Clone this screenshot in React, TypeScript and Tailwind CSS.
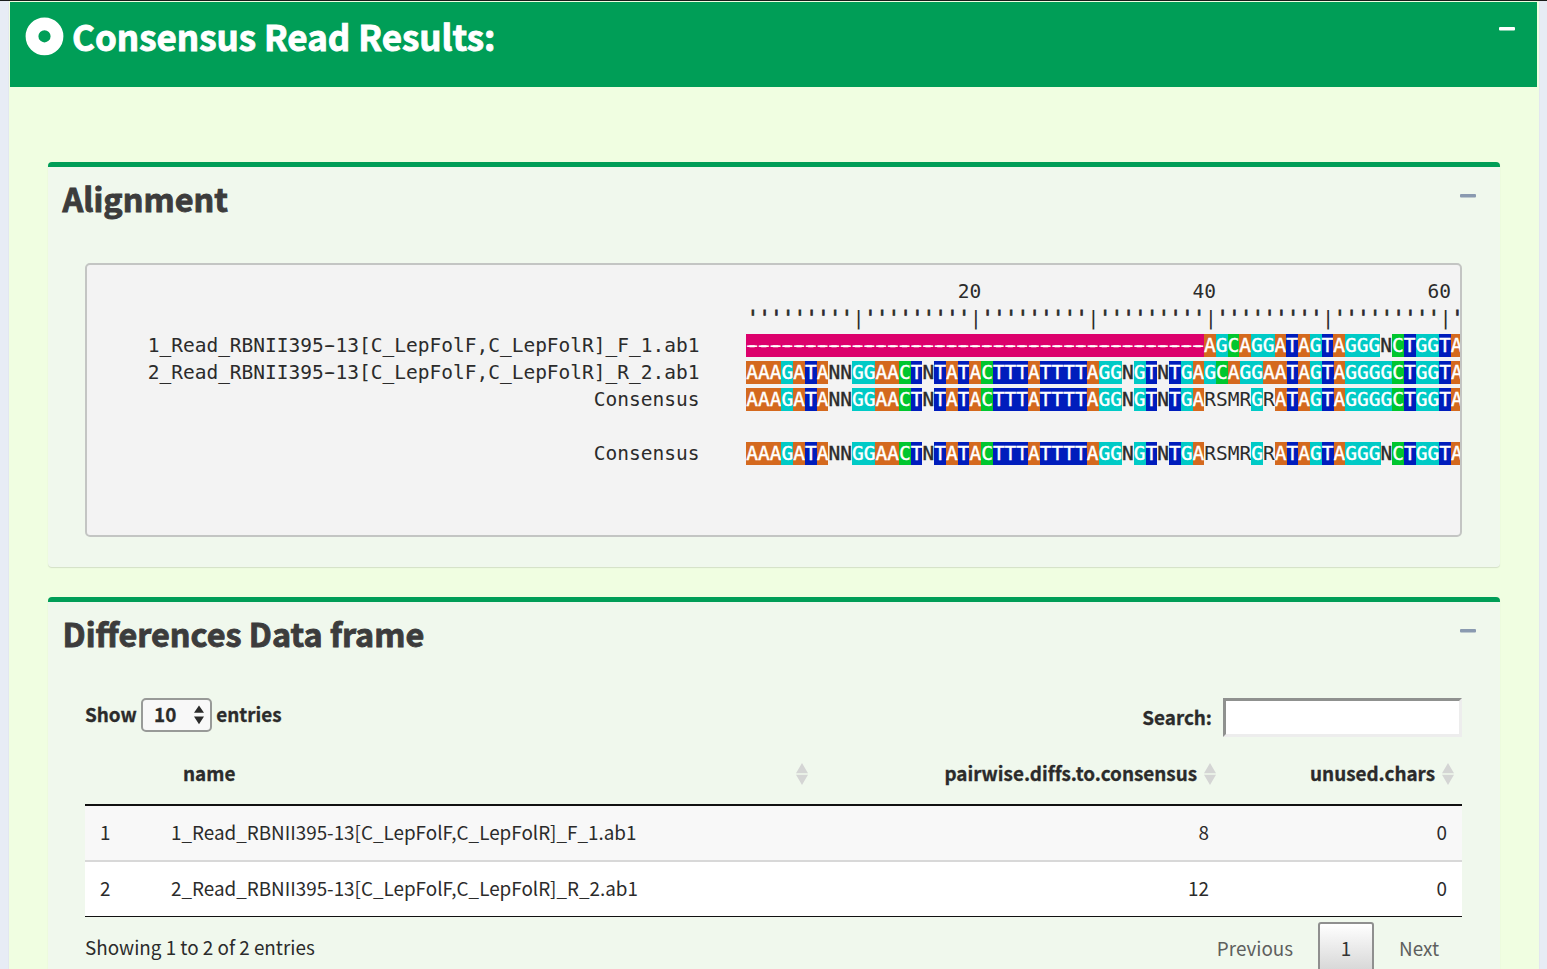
import React from 'react';

const TAIL_A = 'ATAGTAGGGGCTGGTA';
const TAIL_B = 'ATAGTAGGGNCTGGTA';
const HEAD = 'AAAGATANNGGAACTNTATACTTTATTTTAGGNGTNTGA';

const rows: { name: string; seq: string }[] = [
  { name: '1_Read_RBNII395-13[C_LepFolF,C_LepFolR]_F_1.ab1', seq: '-'.repeat(39) + 'AGCAGG' + TAIL_B },
  { name: '2_Read_RBNII395-13[C_LepFolF,C_LepFolR]_R_2.ab1', seq: HEAD + 'GCAGGA' + TAIL_A },
  { name: 'Consensus', seq: HEAD + 'RSMRGR' + TAIL_A },
  { name: '', seq: '' },
  { name: 'Consensus', seq: HEAD + 'RSMRGR' + TAIL_B },
];

const white = ' text-white [-webkit-text-stroke:0.4px_#fff]';

const baseClass: Record<string, string> = {
  A: 'bg-[#d4691e]' + white,
  G: 'bg-[#00cac6]' + white,
  T: 'bg-[#001dbc]' + white,
  C: 'bg-[#00c62e]' + white,
  N: '[-webkit-text-stroke:0.4px_#2b2b2b]',
  // Side shadows widen each hyphen until it fills its cell.
  '-': 'bg-[#dc006c] text-white [-webkit-text-stroke:0.3px_#fff] [text-shadow:-2.5px_0_#fff,2.5px_0_#fff]',
};

const ruler = Array.from({ length: 61 }, (_, i) => ((i + 1) % 10 === 0 ? '|' : "'")).join('');
const numbers = '20'.padStart(20) + '40'.padStart(20) + '60'.padStart(20);

function Label({ text }: { text: string }) {
  const parts = text.split('-');
  return (
    <span>
      {parts.map((p, i) => (
        <React.Fragment key={i}>
          {i > 0 && <span className="[text-shadow:-2px_0_#2b2b2b,2px_0_#2b2b2b]">-</span>}
          {p}
        </React.Fragment>
      ))}
    </span>
  );
}

function Sequence({ seq }: { seq: string }) {
  const runs = seq.match(/(.)\1*/g) ?? [];
  return (
    <span className="whitespace-pre">
      {runs.map((run, i) => (
        <span key={i} className={baseClass[run[0]] ?? ''}>
          {run}
        </span>
      ))}
    </span>
  );
}

function Ruler() {
  const runs = ruler.match(/(.)\1*/g) ?? [];
  return (
    <>
      {runs.map((run, i) => (
        <span key={i} className={run[0] === "'" ? 'relative -top-px [-webkit-text-stroke:0.8px_#2b2b2b]' : ''}>
          {run}
        </span>
      ))}
    </>
  );
}

function Minus({ className }: { className: string }) {
  return (
    <button type="button" aria-label="Collapse" className={className}>
      <svg width="16" height="4" viewBox="0 0 16 4" className="block">
        <rect width="16" height="3.6" rx="1" fill="currentColor" />
      </svg>
    </button>
  );
}

function Panel({ title, className, children }: { title: string; className: string; children: React.ReactNode }) {
  return (
    <section
      className={
        'flex-none rounded-[4px] border-t-[5px] border-[#009e57] bg-[#f0f8ed] pr-[38px] pl-[37px] shadow-[0_1px_1px_rgba(0,0,0,0.12)] ' +
        className
      }
    >
      <header className="-mr-[14px] -ml-[22.5px] flex h-[96px] items-start justify-between">
        <h2 className="pt-[7px] text-[32.4px] leading-[48px] font-bold text-[#3c3c3c] [-webkit-text-stroke:0.9px_#3c3c3c]">
          {title}
        </h2>
        <Minus className="mt-[26.5px] mr-[0.5px] text-[#8a9ab0]" />
      </header>
      {children}
    </section>
  );
}

function SortIcon() {
  return (
    <svg width="12" height="24" viewBox="0 0 12 24" className="block" fill="#d4d5d4">
      <path d="M6 1 12 11.2H0zM0 12.8h12L6 23z" />
    </svg>
  );
}

const columns = 'grid grid-cols-[71px_660px_408px_238px]';
const bold = ' font-bold [-webkit-text-stroke:0.3px_#2b2b2b] ';

export default function App() {
  return (
    <div
      className="flex h-[969px] w-[1547px] flex-col overflow-hidden bg-[#e7ecf5] text-[18.85px] text-[#2b2b2b]"
      style={{ fontFamily: '"Noto Sans CJK SC", "Open Sans", sans-serif' }}
    >
      <div className="h-px flex-none bg-[#1a1d1c]" />
      <main className="mr-[8px] ml-[9px] flex flex-1 flex-col bg-[#f0fee1] pr-[2px] pl-px shadow-[0_1px_1px_rgba(0,0,0,0.12)]">
        <header className="mt-px flex h-[85px] flex-none items-start justify-between bg-[#009e57] pr-[22.5px] pl-[15px] text-white">
          <div className="flex items-start">
            <svg width="39" height="39" viewBox="0 0 39 39" className="mt-[15px] mr-[8px] block">
              <circle cx="19.5" cy="19.3" r="12.5" fill="none" stroke="currentColor" strokeWidth="12.8" />
            </svg>
            <h1 className="pt-[10px] text-[34.95px] leading-[48px] font-bold [-webkit-text-stroke:0.9px_#fff]">
              Consensus Read Results:
            </h1>
          </div>
          <Minus className="mt-[25px]" />
        </header>

        <div className="mr-[37px] ml-[38px] flex flex-col pt-[75px]">
          <Panel title="Alignment" className="h-[405px]">
            <div className="h-[274px] overflow-hidden rounded-[5px] border-2 border-[#c3c5c3] bg-[#f3f3f3] pt-[13px]">
              <div
                className="text-[19.5px] leading-[27px] whitespace-pre"
                style={{ fontFamily: '"DejaVu Sans Mono", "Liberation Mono", monospace' }}
              >
                <div className="pl-[659.5px]">{numbers}</div>
                <div className="pl-[660px]">
                  <Ruler />
                </div>
                {rows.map((row, i) => (
                  <div key={i} className="flex h-[27px]">
                    <div className="w-[612.5px] flex-none text-right">
                      <Label text={row.name} />
                    </div>
                    <div className="pl-[46.7px]">
                      <Sequence seq={row.seq} />
                    </div>
                  </div>
                ))}
              </div>
            </div>
          </Panel>

          <Panel title="Differences Data frame" className="mt-[30px] h-[420px]">
            <div className={'flex h-[52px] items-start justify-between' + bold}>
              <label className="flex items-start leading-[31px]">
                Show
                <span className="mx-[4.3px] flex h-[34px] w-[71px] items-center justify-between rounded-[5px] border-2 border-[#989a98] bg-[#f8f8f8] pr-[6px] pl-[11px]">
                  <span className="-mt-[3px] leading-[30px]">10</span>
                  <svg width="10" height="20" viewBox="0 0 10 20" fill="#2b2b2b">
                    <path d="M5 .5 10 7.8H0zM0 11.6h10L5 19.2z" />
                  </svg>
                </span>
                entries
              </label>
              <label className="flex items-start leading-[37px]">
                Search:
                <input
                  type="text"
                  className="ml-[11px] h-[39px] w-[239px] border-3 border-t-[#8f918f] border-r-[#ededed] border-b-[#ededed] border-l-[#8f918f] bg-white"
                />
              </label>
            </div>

            <div className={columns + bold + 'h-[56px] border-b-2 border-[#111] leading-[46px]'}>
              <div />
              <div className="flex h-[48px] items-center justify-between pr-[8px] pl-[27px]">
                <span className="-mt-[2px]">name</span>
                <SortIcon />
              </div>
              <div className="flex h-[48px] items-center justify-end gap-[7px] pr-[8px]">
                <span className="-mt-[2px] [font-variant-ligatures:none]">pairwise.diffs.to.consensus</span>
                <SortIcon />
              </div>
              <div className="flex h-[48px] items-center justify-end gap-[7px] pr-[8px]">
                <span className="-mt-[2px]">unused.chars</span>
                <SortIcon />
              </div>
            </div>
            <div className={columns + ' h-[56px] border-b-2 border-[#d8d8d8] bg-[#f8f8f8] leading-[52px]'}>
              <div className="pl-[15px]">1</div>
              <div className="pl-[15px]">1_Read_RBNII395-13[C_LepFolF,C_LepFolR]_F_1.ab1</div>
              <div className="pr-[15px] text-right">8</div>
              <div className="pr-[15px] text-right">0</div>
            </div>
            <div className={columns + ' h-[55px] border-b border-[#111] bg-white leading-[52px]'}>
              <div className="pl-[15px]">2</div>
              <div className="pl-[15px]">2_Read_RBNII395-13[C_LepFolF,C_LepFolR]_R_2.ab1</div>
              <div className="pr-[15px] text-right">12</div>
              <div className="pr-[15px] text-right">0</div>
            </div>

            <div className="flex items-start justify-between pt-[5px]">
              <div className="leading-[50px]">Showing 1 to 2 of 2 entries</div>
              <nav className="flex items-start pr-[23px] leading-[52px] text-[#5e605e]">
                <span>Previous</span>
                <span className="mr-[25px] ml-[25px] h-[54px] w-[56px] rounded-[3px] border-2 border-[#8f8f8f] bg-linear-to-b from-white to-[#d4d4d4] text-center leading-[48px] text-[#333]">
                  1
                </span>
                <span>Next</span>
              </nav>
            </div>
          </Panel>
        </div>
      </main>
    </div>
  );
}
